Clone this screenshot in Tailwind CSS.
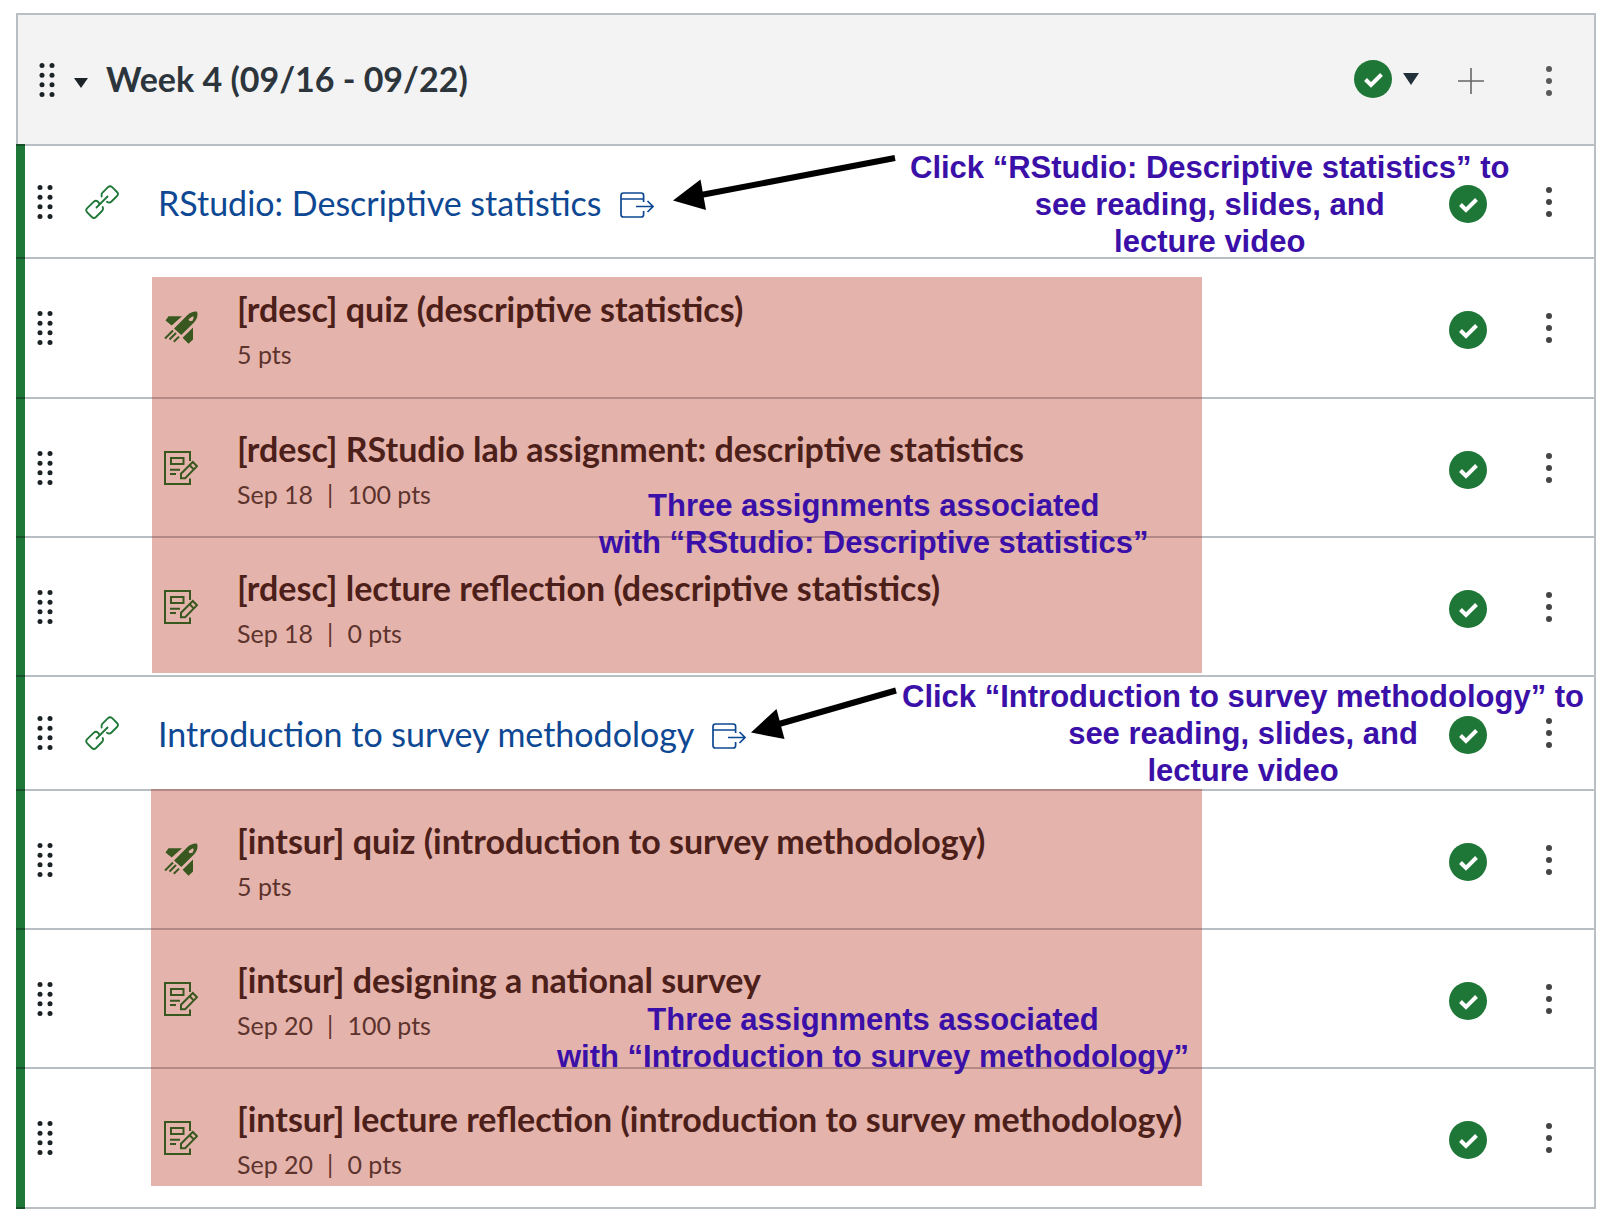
<!DOCTYPE html>
<html lang="en">
<head>
<meta charset="utf-8">
<title>Week 4</title>
<script src="https://cdn.jsdelivr.net/npm/@tailwindcss/browser@4"></script>
</head>
<body class="bg-white font-[Lato,sans-serif] text-[#1c2327]">

<svg class="hidden" aria-hidden="true">
  <symbol id="grip" viewBox="0 0 16 36">
    <g fill="currentColor"><circle cx="3" cy="3.5" r="2.5"/><circle cx="13" cy="3.5" r="2.5"/><circle cx="3" cy="13.2" r="2.5"/><circle cx="13" cy="13.2" r="2.5"/><circle cx="3" cy="22.8" r="2.5"/><circle cx="13" cy="22.8" r="2.5"/><circle cx="3" cy="32.5" r="2.5"/><circle cx="13" cy="32.5" r="2.5"/></g>
  </symbol>
  <symbol id="more" viewBox="0 0 6 30">
    <g fill="currentColor"><circle cx="3" cy="3" r="3"/><circle cx="3" cy="15" r="3"/><circle cx="3" cy="27" r="3"/></g>
  </symbol>
  <symbol id="check" viewBox="0 0 38 38">
    <circle cx="19" cy="19" r="19" fill="#1e7737"/>
    <path d="M11.5 19.5 17 25 27.5 14.5" fill="none" stroke="#fff" stroke-width="4"/>
  </symbol>
  <symbol id="caret" viewBox="0 0 16 12"><path d="M0 0H16L8 12Z" fill="currentColor"/></symbol>
  <symbol id="link" viewBox="0 0 34 34">
    <g fill="none" stroke="currentColor" stroke-width="1.8" stroke-linecap="round">
      <path d="M16.6 11.6V9.6Q16.6 8.6 17.3 7.900L23 2.200Q25 .2 27.200 2.200L32 7Q34 9 32 11L26.500 16.500Q24.300 18.600 22 16.700"/>
      <path d="M14.600 18.900 13 16.700Q10.800 14.600 8.600 16.800L2.200 23.200Q.2 25.200 2.200 27.300L6.800 32Q8.900 34 11 32L17 26Q18.600 24.400 17.700 22"/>
      <path d="M11.500 22.500 22.500 11.500"/>
    </g>
  </symbol>
  <symbol id="external" viewBox="0 0 34 26">
    <g fill="none" stroke="currentColor" stroke-width="1.700">
      <path d="M23.600 10V3.500Q23.600 1 21.200 1H3.400Q1 1 1 3.500V22.500Q1 25 3.400 25H21.200Q23.600 25 23.600 22.500V19M1 7H23.600M16 14.500H33M27.500 9 33 14.500 27.500 20"/>
    </g>
  </symbol>
  <symbol id="rocket" viewBox="0 0 34 34">
    <g fill="currentColor">
      <path fill-rule="evenodd" d="M10 17.500 23 4.500C26.500 1.200 30 .3 33 .7 34.200 3.800 33.300 8 30 11.500L17.300 24Z M24.500 8.200 25.600 10.300 28.500 9.800 29.600 7C29.800 5.800 29 5.200 28 5.700Z"/>
      <path d="M4.500 5.300H18L7.700 14.500 1.500 9.500ZM29 16.500V28.500L24.500 32.800 18.600 26.800Z"/>
    </g>
    <path d="M1 27.500 9 19.500M5.500 28.500 12 22M9.800 30.800 15 25.600" stroke="currentColor" stroke-width="2" fill="none"/>
  </symbol>
  <symbol id="note" viewBox="0 0 34 34">
    <g fill="none" stroke="currentColor" stroke-width="2">
      <path d="M26 10V1H1V33H26V27.500M7 7H19.500V13H7ZM6 18.800H16M6 23H12"/>
      <path d="M17 27.200V22.700L28.800 11 33 15.200 21.200 27.200ZM25.600 14.200 29.800 18.400"/>
    </g>
  </symbol>
</svg>

<main class="pl-4 pr-[18px] pt-[13px] pb-4">
  <section class="relative border-r-2 border-[#b8bec4]">
    <header class="flex h-[131px] items-center border-l-2 border-t-2 border-[#b8bec4] bg-[#f3f3f3] pl-[21px] pr-[26px]">
      <button type="button" aria-label="Move module"><svg class="block h-9 w-4"><use href="#grip"/></svg></button>
      <button type="button" class="ml-[19px] pt-[6px]" aria-label="Collapse module"><svg class="block h-[10px] w-[14px]" viewBox="0 0 16 12" preserveAspectRatio="none"><path d="M0 0H16L8 12Z" fill="currentColor"/></svg></button>
      <h2 class="ml-[18px] flex-1 whitespace-nowrap pb-[2px] text-[34px] leading-10 font-bold text-[#2d353c]">Week 4 (09/16 - 09/22)</h2>
      <button type="button" class="flex items-center gap-[11px] pb-[2px] text-[#22303a]" aria-label="Published"><svg class="h-[38px] w-[38px]"><use href="#check"/></svg><svg class="h-3 w-4"><use href="#caret"/></svg></button>
      <button type="button" class="ml-[39px] pt-[3px] text-[#666]" aria-label="Add item"><svg class="block h-[26px] w-[26px]" viewBox="0 0 26 26"><path d="M13 0V26M0 13H26" stroke="currentColor" stroke-width="1.600"/></svg></button>
      <button type="button" class="ml-[46px] flex w-[38px] justify-center pt-[3px] text-[#5a5a5a]" aria-label="Module options"><svg class="h-[30px] w-[6px]"><use href="#more"/></svg></button>
    </header>

    <ul>
      <li class="flex h-[113px]">
        <span class="w-[9px] border-t-2 border-[#165029] bg-[#1e7737]"></span>
        <div class="flex flex-1 items-center border-t-2 border-[#b8bec4] pl-3 pr-[26px]">
          <button type="button" aria-label="Move item"><svg class="h-9 w-4"><use href="#grip"/></svg></button>
          <svg class="ml-8 h-[34px] w-[34px] text-[#1e7737]"><use href="#link"/></svg>
          <a href="#" class="ml-[39px] flex flex-1 items-center gap-[18px] whitespace-nowrap pt-[2px] text-[34px] leading-10 text-[#0e4893]">RStudio: Descriptive statistics<svg class="mt-1 h-[26px] w-[34px]"><use href="#external"/></svg></a>
          <button type="button" class="pt-1" aria-label="Published"><svg class="h-[38px] w-[38px]"><use href="#check"/></svg></button>
          <button type="button" class="ml-[43px] flex w-[38px] justify-center text-[#444]" aria-label="Item options"><svg class="h-[30px] w-[6px]"><use href="#more"/></svg></button>
        </div>
      </li>
      <li class="flex h-[140px]">
        <span class="w-[9px] border-t-2 border-[#165029] bg-[#1e7737]"></span>
        <div class="flex flex-1 items-center border-t-2 border-[#b8bec4] pl-3 pr-[26px]">
          <button type="button" aria-label="Move item"><svg class="h-9 w-4"><use href="#grip"/></svg></button>
          <svg class="ml-[111px] h-[34px] w-[34px] text-[#00762f]"><use href="#rocket"/></svg>
          <div class="ml-[39px] flex-1 whitespace-nowrap">
            <a href="#" class="block text-[34px] leading-[52px] font-bold">[rdesc] quiz (descriptive statistics)</a>
            <p class="text-[25px] leading-[38px] text-[#363f43]">5 pts</p>
          </div>
          <button type="button" class="pt-1" aria-label="Published"><svg class="h-[38px] w-[38px]"><use href="#check"/></svg></button>
          <button type="button" class="ml-[43px] flex w-[38px] justify-center text-[#444]" aria-label="Item options"><svg class="h-[30px] w-[6px]"><use href="#more"/></svg></button>
        </div>
      </li>
      <li class="flex h-[139px]">
        <span class="w-[9px] border-t-2 border-[#165029] bg-[#1e7737]"></span>
        <div class="flex flex-1 items-center border-t-2 border-[#b8bec4] pl-3 pr-[26px]">
          <button type="button" aria-label="Move item"><svg class="h-9 w-4"><use href="#grip"/></svg></button>
          <svg class="ml-[111px] h-[34px] w-[34px] text-[#00762f]"><use href="#note"/></svg>
          <div class="ml-[39px] flex-1 whitespace-nowrap">
            <a href="#" class="block text-[34px] leading-[52px] font-bold">[rdesc] RStudio lab assignment: descriptive statistics</a>
            <p class="flex gap-[14px] text-[25px] leading-[38px] text-[#363f43]"><span>Sep 18</span><span>|</span><span>100 pts</span></p>
          </div>
          <button type="button" class="pt-1" aria-label="Published"><svg class="h-[38px] w-[38px]"><use href="#check"/></svg></button>
          <button type="button" class="ml-[43px] flex w-[38px] justify-center text-[#444]" aria-label="Item options"><svg class="h-[30px] w-[6px]"><use href="#more"/></svg></button>
        </div>
      </li>
      <li class="flex h-[139px]">
        <span class="w-[9px] border-t-2 border-[#165029] bg-[#1e7737]"></span>
        <div class="flex flex-1 items-center border-t-2 border-[#b8bec4] pl-3 pr-[26px]">
          <button type="button" aria-label="Move item"><svg class="h-9 w-4"><use href="#grip"/></svg></button>
          <svg class="ml-[111px] h-[34px] w-[34px] text-[#00762f]"><use href="#note"/></svg>
          <div class="ml-[39px] flex-1 whitespace-nowrap">
            <a href="#" class="block text-[34px] leading-[52px] font-bold">[rdesc] lecture reflection (descriptive statistics)</a>
            <p class="flex gap-[14px] text-[25px] leading-[38px] text-[#363f43]"><span>Sep 18</span><span>|</span><span>0 pts</span></p>
          </div>
          <button type="button" class="pt-1" aria-label="Published"><svg class="h-[38px] w-[38px]"><use href="#check"/></svg></button>
          <button type="button" class="ml-[43px] flex w-[38px] justify-center text-[#444]" aria-label="Item options"><svg class="h-[30px] w-[6px]"><use href="#more"/></svg></button>
        </div>
      </li>
      <li class="flex h-[114px]">
        <span class="w-[9px] border-t-2 border-[#165029] bg-[#1e7737]"></span>
        <div class="flex flex-1 items-center border-t-2 border-[#b8bec4] pl-3 pr-[26px]">
          <button type="button" aria-label="Move item"><svg class="h-9 w-4"><use href="#grip"/></svg></button>
          <svg class="ml-8 h-[34px] w-[34px] text-[#1e7737]"><use href="#link"/></svg>
          <a href="#" class="ml-[39px] flex flex-1 items-center gap-[18px] whitespace-nowrap pt-[2px] text-[34px] leading-10 text-[#0e4893]">Introduction to survey methodology<svg class="mt-1 h-[26px] w-[34px]"><use href="#external"/></svg></a>
          <button type="button" class="pt-1" aria-label="Published"><svg class="h-[38px] w-[38px]"><use href="#check"/></svg></button>
          <button type="button" class="ml-[43px] flex w-[38px] justify-center text-[#444]" aria-label="Item options"><svg class="h-[30px] w-[6px]"><use href="#more"/></svg></button>
        </div>
      </li>
      <li class="flex h-[139px]">
        <span class="w-[9px] border-t-2 border-[#165029] bg-[#1e7737]"></span>
        <div class="flex flex-1 items-center border-t-2 border-[#b8bec4] pl-3 pr-[26px]">
          <button type="button" aria-label="Move item"><svg class="h-9 w-4"><use href="#grip"/></svg></button>
          <svg class="ml-[111px] h-[34px] w-[34px] text-[#00762f]"><use href="#rocket"/></svg>
          <div class="ml-[39px] flex-1 whitespace-nowrap">
            <a href="#" class="block text-[34px] leading-[52px] font-bold">[intsur] quiz (introduction to survey methodology)</a>
            <p class="text-[25px] leading-[38px] text-[#363f43]">5 pts</p>
          </div>
          <button type="button" class="pt-1" aria-label="Published"><svg class="h-[38px] w-[38px]"><use href="#check"/></svg></button>
          <button type="button" class="ml-[43px] flex w-[38px] justify-center text-[#444]" aria-label="Item options"><svg class="h-[30px] w-[6px]"><use href="#more"/></svg></button>
        </div>
      </li>
      <li class="flex h-[139px]">
        <span class="w-[9px] border-t-2 border-[#165029] bg-[#1e7737]"></span>
        <div class="flex flex-1 items-center border-t-2 border-[#b8bec4] pl-3 pr-[26px]">
          <button type="button" aria-label="Move item"><svg class="h-9 w-4"><use href="#grip"/></svg></button>
          <svg class="ml-[111px] h-[34px] w-[34px] text-[#00762f]"><use href="#note"/></svg>
          <div class="ml-[39px] flex-1 whitespace-nowrap">
            <a href="#" class="block text-[34px] leading-[52px] font-bold">[intsur] designing a national survey</a>
            <p class="flex gap-[14px] text-[25px] leading-[38px] text-[#363f43]"><span>Sep 20</span><span>|</span><span>100 pts</span></p>
          </div>
          <button type="button" class="pt-1" aria-label="Published"><svg class="h-[38px] w-[38px]"><use href="#check"/></svg></button>
          <button type="button" class="ml-[43px] flex w-[38px] justify-center text-[#444]" aria-label="Item options"><svg class="h-[30px] w-[6px]"><use href="#more"/></svg></button>
        </div>
      </li>
      <li class="flex h-[142px]">
        <span class="w-[9px] border-y-2 border-[#165029] bg-[#1e7737]"></span>
        <div class="flex flex-1 items-center border-y-2 border-[#b8bec4] pl-3 pr-[26px]">
          <button type="button" aria-label="Move item"><svg class="h-9 w-4"><use href="#grip"/></svg></button>
          <svg class="ml-[111px] h-[34px] w-[34px] text-[#00762f]"><use href="#note"/></svg>
          <div class="ml-[39px] flex-1 whitespace-nowrap">
            <a href="#" class="block text-[34px] leading-[52px] font-bold">[intsur] lecture reflection (introduction to survey methodology)</a>
            <p class="flex gap-[14px] text-[25px] leading-[38px] text-[#363f43]"><span>Sep 20</span><span>|</span><span>0 pts</span></p>
          </div>
          <button type="button" class="pt-1" aria-label="Published"><svg class="h-[38px] w-[38px]"><use href="#check"/></svg></button>
          <button type="button" class="ml-[43px] flex w-[38px] justify-center text-[#444]" aria-label="Item options"><svg class="h-[30px] w-[6px]"><use href="#more"/></svg></button>
        </div>
      </li>
    </ul>

    <!-- Annotations laid over the module list -->
    <div class="pointer-events-none absolute inset-0 whitespace-nowrap text-center font-['Liberation_Sans',Arial,sans-serif] text-[31px] leading-[37px] font-bold text-[#3a10a8]">
      <div class="absolute left-[136px] top-[264px] h-[396px] w-[1050px] bg-[#ad1b03]/33"></div>
      <div class="absolute left-[135px] top-[776px] h-[397px] w-[1051px] bg-[#ad1b03]/33"></div>
      <svg class="absolute left-[657px] top-[140px] h-[60px] w-[226px]" viewBox="0 0 226 60"><path d="M222 5 28 42" stroke="#000" stroke-width="6"/><path d="M0 47.500 27.500 26.500 33 57Z"/></svg>
      <svg class="absolute left-[735px] top-[673px] h-[60px] w-[150px]" viewBox="0 0 150 60"><path d="M145 4.500 28 38" stroke="#000" stroke-width="6"/><path d="M0 46.500 25.500 23 33.500 53Z"/></svg>
      <p class="absolute left-[894px] top-[136px]">Click “RStudio: Descriptive statistics” to<br>see reading, slides, and<br>lecture video</p>
      <p class="absolute left-[886px] top-[665px]">Click “Introduction to survey methodology” to<br>see reading, slides, and<br>lecture video</p>
      <p class="absolute left-[583px] top-[474px]">Three assignments associated<br>with “RStudio: Descriptive statistics”</p>
      <p class="absolute left-[541px] top-[988px]">Three assignments associated<br>with “Introduction to survey methodology”</p>
    </div>
  </section>
</main>
</body>
</html>
